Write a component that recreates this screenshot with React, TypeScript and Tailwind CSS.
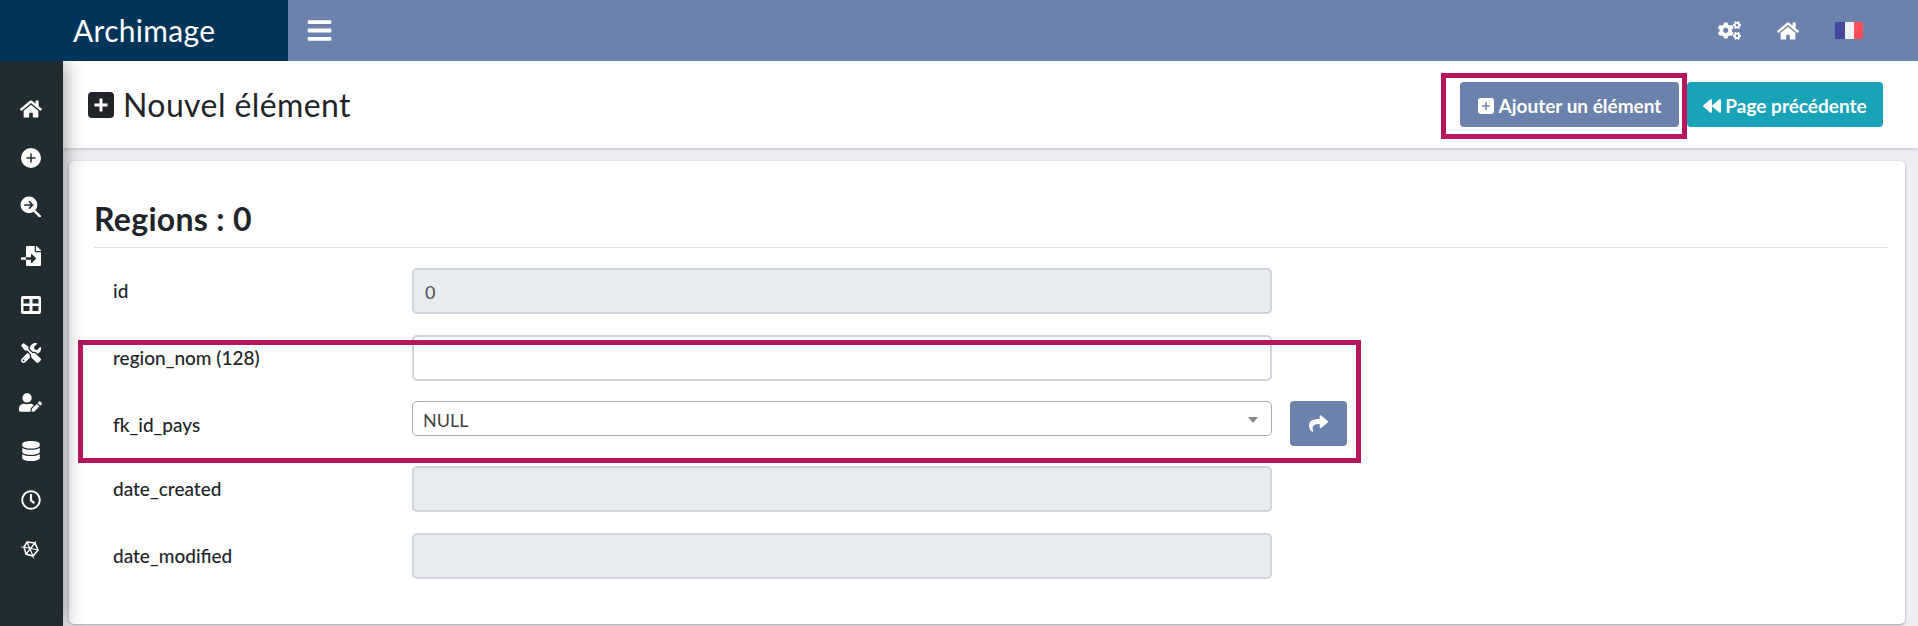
import React from "react";
import {
  FaBars,
  FaBackward,
  FaCogs,
  FaDatabase,
  FaFileImport,
  FaHome,
  FaRegClock,
  FaShare,
  FaTools,
  FaUserEdit,
} from "react-icons/fa";

const CirclePlus = () => (
  <svg viewBox="0 0 20 20" className="h-[20px] w-[20px]">
    <circle cx="10" cy="10" r="10" fill="#fff" />
    <path d="M10 5.5v9M5.5 10h9" stroke="#212c30" strokeWidth="1.5" />
  </svg>
);

const SquarePlus = ({ size, fill, stroke, weight }: { size: string; fill: string; stroke: string; weight: number }) => (
  <svg viewBox="0 0 26 26" className={size}>
    <rect width="26" height="26" rx="4" fill={fill} />
    <path d="M13 6.5v13M6.5 13h13" stroke={stroke} strokeWidth={weight} />
  </svg>
);

const SearchArrow = () => (
  <svg viewBox="0 0 20 20" className="h-[21px] w-[21px]">
    <circle cx="8.5" cy="8.5" r="8" fill="#fff" />
    <path d="M13 13.5l6 6" stroke="#fff" strokeWidth="2.4" strokeLinecap="round" />
    <path d="M4 8.5h8M8.5 5l3.5 3.5-3.5 3.5" stroke="#212c30" strokeWidth="1.5" fill="none" />
  </svg>
);

const TableGrid = () => (
  <svg viewBox="0 0 20 18" className="h-[18px] w-[20px]">
    <path
      fillRule="evenodd"
      fill="#fff"
      d="M2 0h16a2 2 0 0 1 2 2v14a2 2 0 0 1-2 2H2a2 2 0 0 1-2-2V2a2 2 0 0 1 2-2zm0.5 3v4.5h6V3zm9 0v4.5h6V3zm-9 7v5h6v-5zm9 0v5h6v-5z"
    />
  </svg>
);

const AtomMark = () => (
  <svg viewBox="0 0 20 20" className="h-[20px] w-[20px]" fill="none" stroke="#fff">
    <path d="M6 3l8 1 3 7-5 6-7-2-2-7z" strokeWidth="1.6" />
    <path d="M6 3l6 14M14 4L5 15M3 8l14 3" strokeWidth="1.2" />
    <path d="M0 8h4M15 2l-2 4M11 16l2 4" strokeWidth="0.7" />
  </svg>
);

const FrenchFlag = () => (
  <svg viewBox="0 0 28 17" className="h-[17px] w-[28px]">
    <rect width="10" height="17" fill="#43479d" />
    <rect x="10" width="9" height="17" fill="#f2f2f2" />
    <rect x="19" width="9" height="17" fill="#fb4f5c" />
  </svg>
);

const sideIcons = [
  <FaHome key="home" className="text-[22px]" />,
  <CirclePlus key="add" />,
  <SearchArrow key="search" />,
  <FaFileImport key="import" className="text-[20px]" />,
  <TableGrid key="table" />,
  <FaTools key="tools" className="text-[20px]" />,
  <FaUserEdit key="user" className="text-[23px]" />,
  <FaDatabase key="db" className="text-[20px]" />,
  <FaRegClock key="clock" className="text-[20px]" />,
  <AtomMark key="atom" />,
];

const Field = ({
  label,
  value,
  disabled = true,
  spacing = "mb-[20px]",
}: {
  label: string;
  value?: string;
  disabled?: boolean;
  spacing?: string;
}) => (
  <div className={`flex items-center ${spacing}`}>
    <label className="w-[318px] pl-[19px] text-[19px] font-medium">{label}</label>
    <div
      className={`flex h-[46px] w-[860px] items-center rounded-[5px] border-2 border-[#ced4da] px-[11px] pt-[2px] text-[18px] text-[#495057] ${
        disabled ? "bg-[#e9ecef]" : "bg-white"
      }`}
    >
      {value}
    </div>
  </div>
);

export default function App() {
  return (
    <div className="relative flex h-[626px] w-[1918px] flex-col overflow-hidden bg-[#eeeff4] font-['Lato',sans-serif] text-[#212529]">
      {/* Top bar */}
      <header className="relative z-20 flex h-[61px] shrink-0 bg-[#6c81ab] text-white">
        <div className="flex w-[288px] items-center bg-[#003459] pl-[73px] text-[30px] tracking-[0.3px]">Archimage</div>
        <div className="flex flex-1 items-center pl-[18px]">
          <FaBars className="text-[27px]" />
          <div className="ml-auto flex items-center pr-[55px]">
            <FaCogs className="mr-[36px] text-[23px]" />
            <FaHome className="mr-[36px] text-[22px]" />
            <FrenchFlag />
          </div>
        </div>
      </header>

      <div className="flex flex-1">
        {/* Sidebar */}
        <aside className="z-10 flex w-[63px] shrink-0 flex-col items-center bg-[#212c30] pr-[2px] pt-[24px] text-white shadow-[0_0_20px_rgba(0,0,0,0.45)]">
          {sideIcons.map((icon, i) => (
            <div key={i} className="flex h-[48.8px] w-full items-center justify-center">
              {icon}
            </div>
          ))}
        </aside>

        <main className="flex-1">
          {/* Page title */}
          <div className="flex h-[87px] items-center justify-between bg-white pl-[25px] pr-[35px] shadow-[0_1px_3px_rgba(0,0,0,0.2)]">
            <h1 className="flex items-center text-[32px] tracking-[0.4px]">
              <SquarePlus size="mr-[9px] h-[26px] w-[26px]" fill="#212529" stroke="#fff" weight={3} />
              Nouvel élément
            </h1>
            <div className="flex gap-[8px]">
              <button className="flex h-[45px] w-[219px] items-center justify-center rounded-[4px] bg-[#6c81ab] pt-[3px] text-[19px] font-bold text-white">
                <SquarePlus size="mr-[5px] h-[16px] w-[16px]" fill="#fff" stroke="#6c81ab" weight={2.4} />
                Ajouter un élément
              </button>
              <button className="flex h-[45px] w-[196px] items-center justify-center rounded-[4px] bg-[#19a3b9] pt-[3px] text-[19px] font-bold text-white">
                <FaBackward className="mr-[4px] text-[18px]" />
                Page précédente
              </button>
            </div>
          </div>

          {/* Form card */}
          <section className="ml-[6px] mr-[13px] mt-[13px] h-[463px] rounded-[5px] bg-white pl-[25px] pr-[17px] pt-[35px] shadow-[0_1px_3px_rgba(0,0,0,0.35)]">
            <h2 className="h-[52px] border-b border-[#dee2e6] text-[32px] font-bold leading-[46px] tracking-[0.3px]">Regions : 0</h2>
            <div className="pt-[20px]">
              <Field label="id" value="0" spacing="mb-[21px]" />
              <Field label="region_nom (128)" disabled={false} />
              <div className="mb-[20px] flex items-start">
                <label className="w-[318px] pl-[19px] pt-[10px] text-[19px] font-medium">fk_id_pays</label>
                <div className="flex h-[35px] w-[860px] items-center justify-between rounded-[5px] border border-[#aaa] pl-[10px] pr-[13px] pt-[3px] text-[18px] text-[#444]">
                  NULL
                  <span className="h-0 w-0 border-x-[5px] border-t-[6px] border-x-transparent border-t-[#888]" />
                </div>
                <button className="ml-[18px] flex h-[45px] w-[57px] items-center justify-center rounded-[4px] bg-[#6c81ab] text-[19px] text-white">
                  <FaShare />
                </button>
              </div>
              <Field label="date_created" spacing="mb-[21px]" />
              <Field label="date_modified" />
            </div>
          </section>
        </main>
      </div>

      {/* Annotation frames drawn over the page */}
      <div className="absolute left-[1441px] top-[73px] h-[66px] w-[246px] border-[5px] border-[#b5175f]" />
      <div className="absolute left-[78px] top-[340px] h-[123px] w-[1283px] border-[5px] border-[#b5175f]" />
    </div>
  );
}
